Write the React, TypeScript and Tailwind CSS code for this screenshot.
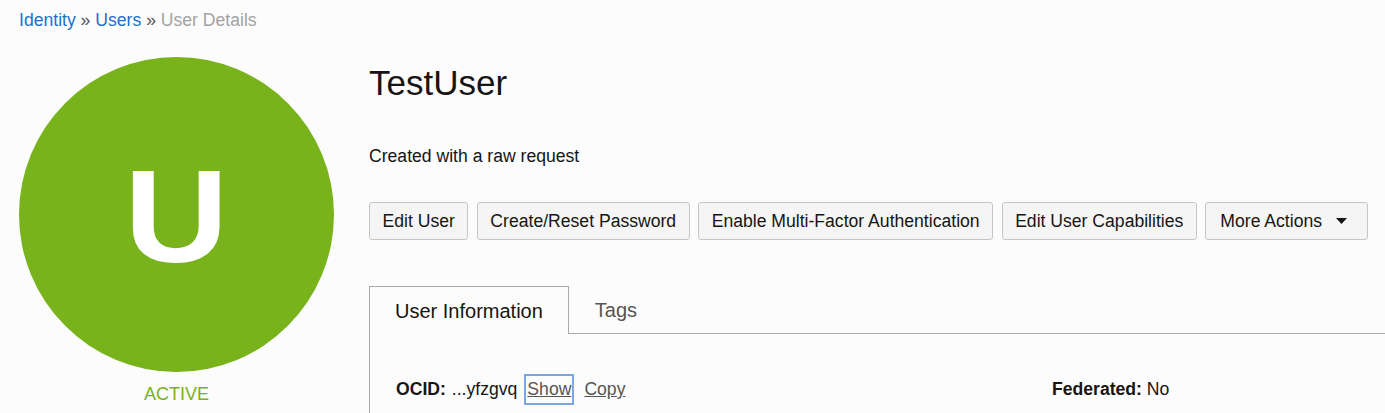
export default function App() {
    const actions = ['Edit User', 'Create/Reset Password', 'Enable Multi-Factor Authentication', 'Edit User Capabilities'];

    return (
        <div className="min-h-screen bg-[#fcfcfc] text-[#161513] font-['Liberation_Sans',Arial,sans-serif] overflow-hidden">
            <nav className="pl-[19px] pt-[10px] text-[17.6px] leading-[21px]">
                <a className="text-[#1b6fcf]">Identity</a>
                <span className="text-[#555]"> » </span>
                <a className="text-[#1b6fcf]">Users</a>
                <span className="text-[#555]"> » </span>
                <span className="text-[#a3a3a3]">User Details</span>
            </nav>

            <div className="flex pl-[19px] pt-[26px]">
                <div className="w-[315px] shrink-0 flex flex-col items-center">
                    <div className="w-[315px] h-[315px] rounded-full bg-[#78b31b] flex items-center justify-center">
                        <span className="text-white font-bold text-[131px] leading-none pt-[4px] scale-x-[1.1]">U</span>
                    </div>
                    <div className="mt-[11px] text-[18px] leading-[22px] text-[#78b31b]">ACTIVE</div>
                </div>

                <div className="ml-[35px] flex-1 min-w-0">
                    <h1 className="text-[35px] leading-[40px] mt-[6px]">TestUser</h1>
                    <p className="mt-[43px] text-[17.6px] leading-[20px]">Created with a raw request</p>

                    <div className="mt-[36px] flex gap-[8.5px]">
                        {actions.map((a) => (
                            <button
                                key={a}
                                className="h-[38px] px-[12.5px] rounded-[3px] border border-[#c6c6c6] bg-[#f5f5f5] text-[17.6px] text-[#161513]"
                            >
                                {a}
                            </button>
                        ))}
                        <button className="h-[38px] pl-[14px] pr-[20px] rounded-[3px] border border-[#c6c6c6] bg-[#f5f5f5] text-[17.6px] text-[#161513] flex items-center gap-[14px]">
                            More Actions
                            <svg width="11" height="6" viewBox="0 0 11 6">
                                <path d="M0 0h11L5.5 6z" fill="#161513" />
                            </svg>
                        </button>
                    </div>

                    <div className="mt-[46px] flex">
                        <div className="h-[48px] px-[25px] border border-b-0 border-[#aaaaaa] bg-[#fcfcfc] flex items-center text-[20px] text-[#161513]">
                            User Information
                        </div>
                        <div className="flex-1 border-b border-[#aaaaaa] flex items-center pl-[26px] text-[20px] text-[#555]">
                            Tags
                        </div>
                    </div>
                    <div className="border-l border-[#aaaaaa] pl-[26px] pt-[40px] pb-[20px] flex items-center text-[17.6px] leading-[21px]">
                        <div className="w-[656px] flex items-center">
                            <span className="font-bold">OCID:</span>
                            <span className="ml-[6px]">...yfzgvq</span>
                            <a className="ml-[7px] px-[1px] py-[3px] border-2 border-[#7aa7e0] text-[#555] underline">Show</a>
                            <a className="ml-[10px] text-[#555] underline">Copy</a>
                        </div>
                        <div>
                            <span className="font-bold">Federated:</span> No
                        </div>
                    </div>
                </div>
            </div>
        </div>
    );
}
